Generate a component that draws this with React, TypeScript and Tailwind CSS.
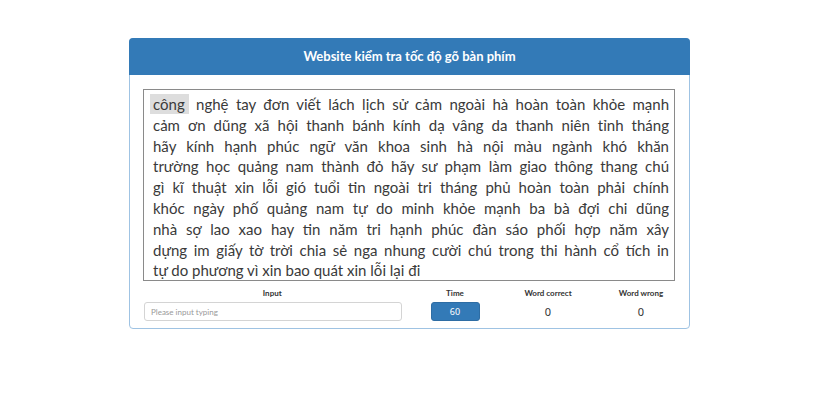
import React from 'react'

const lines = [
  'nghệ tay đơn viết lách lịch sử cảm ngoài hà hoàn toàn khỏe mạnh',
  'cảm ơn dũng xã hội thanh bánh kính dạ vâng da thanh niên tỉnh tháng',
  'hãy kính hạnh phúc ngữ văn khoa sinh hà nội màu ngành khó khăn',
  'trường học quảng nam thành đỏ hãy sư phạm làm giao thông thang chú',
  'gì kĩ thuật xin lỗi gió tuổi tin ngoài tri tháng phủ hoàn toàn phải chính',
  'khóc ngày phố quảng nam tự do minh khỏe mạnh ba bà đợi chi dũng',
  'nhà sợ lao xao hay tin năm tri hạnh phúc đàn sáo phối hợp năm xây',
  'dựng im giấy tờ trời chia sẻ nga nhung cười chú trong thi hành cổ tích in',
]

const font = "font-['Lato',sans-serif]"

function Stat({ label, value }: { label: string; value: string }) {
  return (
    <div className="w-[93px] shrink-0 flex flex-col items-center">
      <div className="text-[8px] font-bold text-[#333] leading-[10px]">{label}</div>
      <div className="mt-[4px] text-[11px] text-[#333] leading-[19px] font-['Noto_Sans',sans-serif]">{value}</div>
    </div>
  )
}

export default function App() {
  return (
    <div className={`min-h-screen bg-white ${font}`}>
      <div className="ml-[129px] pt-[38px]">
        <div className="w-[561px] rounded-[4px] border border-[#9fc3e3] bg-white">
          {/* Header */}
          <div className="h-[37px] -m-px rounded-t-[4px] bg-[#337ab7] flex items-center justify-center">
            <span className="text-white text-[13px] font-bold">
              Website kiểm tra tốc độ gõ bàn phím
            </span>
          </div>

          <div className="px-[13px] pt-[15px] pb-[7px]">
            {/* Words box */}
            <div className="w-[532px] h-[192px] border border-[#8a8a8a] pl-[6px] pr-[5px] pt-[4px] text-[#3a3a3a] text-[15px] leading-[20.8px]">
              <div className="text-justify [text-align-last:justify] whitespace-nowrap">
                <span className="bg-[#dddddd] pl-[3px] pr-[4px] py-[1px]">công</span> {lines[0]}
              </div>
              {lines.slice(1).map((l) => (
                <div key={l} className="pl-[3px] text-justify [text-align-last:justify] whitespace-nowrap">
                  {l}
                </div>
              ))}
              <div className="pl-[3px]">tự do phương vì xin bao quát xin lỗi lại đi</div>
            </div>

            {/* Controls */}
            <div className="flex mt-[7px]">
              <div className="w-[265.5px] shrink-0 flex flex-col items-center">
                <div className="text-[8px] font-bold text-[#333] leading-[10px] -ml-[7px]">Input</div>
                <input
                  placeholder="Please input typing"
                  className="mt-[4px] ml-[1px] self-start w-[258px] h-[19px] rounded-[3px] border border-[#d4d4d4] px-[6px] text-[8px] placeholder:text-[#999] outline-none"
                />
              </div>
              <div className="w-[93px] shrink-0 flex flex-col items-center">
                <div className="text-[8px] font-bold text-[#333] leading-[10px]">Time</div>
                <div className="mt-[4px] w-[49px] h-[19px] rounded-[3px] bg-[#337ab7] border border-[#2e6da4] text-white text-[9px] flex items-center justify-center font-['Noto_Sans',sans-serif]">
                  60
                </div>
              </div>
              <Stat label="Word correct" value="0" />
              <Stat label="Word wrong" value="0" />
            </div>
          </div>
        </div>
      </div>
    </div>
  )
}
